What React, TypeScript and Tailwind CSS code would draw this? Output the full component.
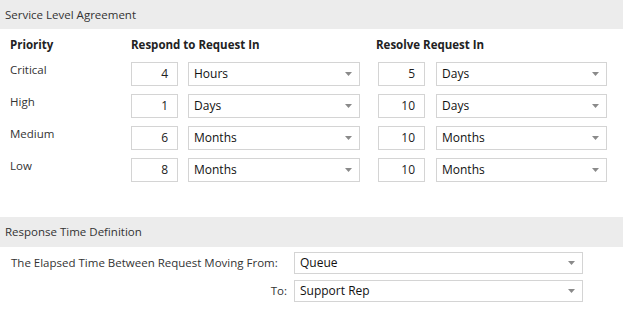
const rows = [
  { label: 'Critical', respond: '4', respondUnit: 'Hours', resolve: '5', resolveUnit: 'Days' },
  { label: 'High', respond: '1', respondUnit: 'Days', resolve: '10', resolveUnit: 'Days' },
  { label: 'Medium', respond: '6', respondUnit: 'Months', resolve: '10', resolveUnit: 'Months' },
  { label: 'Low', respond: '8', respondUnit: 'Months', resolve: '10', resolveUnit: 'Months' },
];

function Arrow() {
  return (
    <svg width="7" height="4" viewBox="0 0 7 4" className="shrink-0">
      <path d="M0 0 H7 L3.5 4 Z" fill="#8a8a8a" />
    </svg>
  );
}

function NumBox({ value }: { value: string }) {
  return (
    <div className="w-[47px] h-[24px] border border-[#d4d4d4] bg-white flex items-center justify-end pr-[9px] text-[12px] text-[#222]">
      {value}
    </div>
  );
}

function Select({ value, width, height }: { value: string; width: string; height: string }) {
  return (
    <div className={`${width} ${height} border border-[#d4d4d4] bg-white flex items-center justify-between pl-[5px] pr-[7px] text-[12px] text-[#111]`}>
      <span>{value}</span>
      <Arrow />
    </div>
  );
}

export default function App() {
  return (
    <div className="w-[623px] h-[318px] bg-white text-[11.5px] text-[#222] font-['Open_Sans',sans-serif] leading-none whitespace-nowrap">
      {/* Service Level Agreement */}
      <div className="h-[29px] bg-[#ececec] flex items-center pl-[5px] text-[#333]">Service Level Agreement</div>

      <div className="pl-[10px] pt-[10px]">
        <div className="flex items-center h-[12px] font-bold text-[#222]">
          <div className="w-[121px]">Priority</div>
          <div className="w-[245px]">Respond to Request In</div>
          <div>Resolve Request In</div>
        </div>

        <div className="mt-[11px] flex flex-col gap-[8px]">
          {rows.map((r) => (
            <div key={r.label} className="flex items-start h-[24px]">
              <div className="w-[121px] pt-[2px] text-[#333]">{r.label}</div>
              <NumBox value={r.respond} />
              <div className="w-[10px]" />
              <Select value={r.respondUnit} width="w-[172px]" height="h-[24px]" />
              <div className="w-[18px]" />
              <NumBox value={r.resolve} />
              <div className="w-[11px]" />
              <Select value={r.resolveUnit} width="w-[171px]" height="h-[24px]" />
            </div>
          ))}
        </div>
      </div>

      {/* Response Time Definition */}
      <div className="mt-[35px] h-[30px] bg-[#ececec] flex items-center pl-[5px] text-[#333]">Response Time Definition</div>

      <div className="pt-[5px] grid grid-cols-[276px_289px] gap-x-[7px] gap-y-[6px] pl-[11px] items-center">
        <div className="text-[#333]">The Elapsed Time Between Request Moving From:</div>
        <Select value="Queue" width="w-[289px]" height="h-[22px]" />
        <div className="text-right text-[#333]">To:</div>
        <Select value="Support Rep" width="w-[289px]" height="h-[22px]" />
      </div>
    </div>
  );
}
